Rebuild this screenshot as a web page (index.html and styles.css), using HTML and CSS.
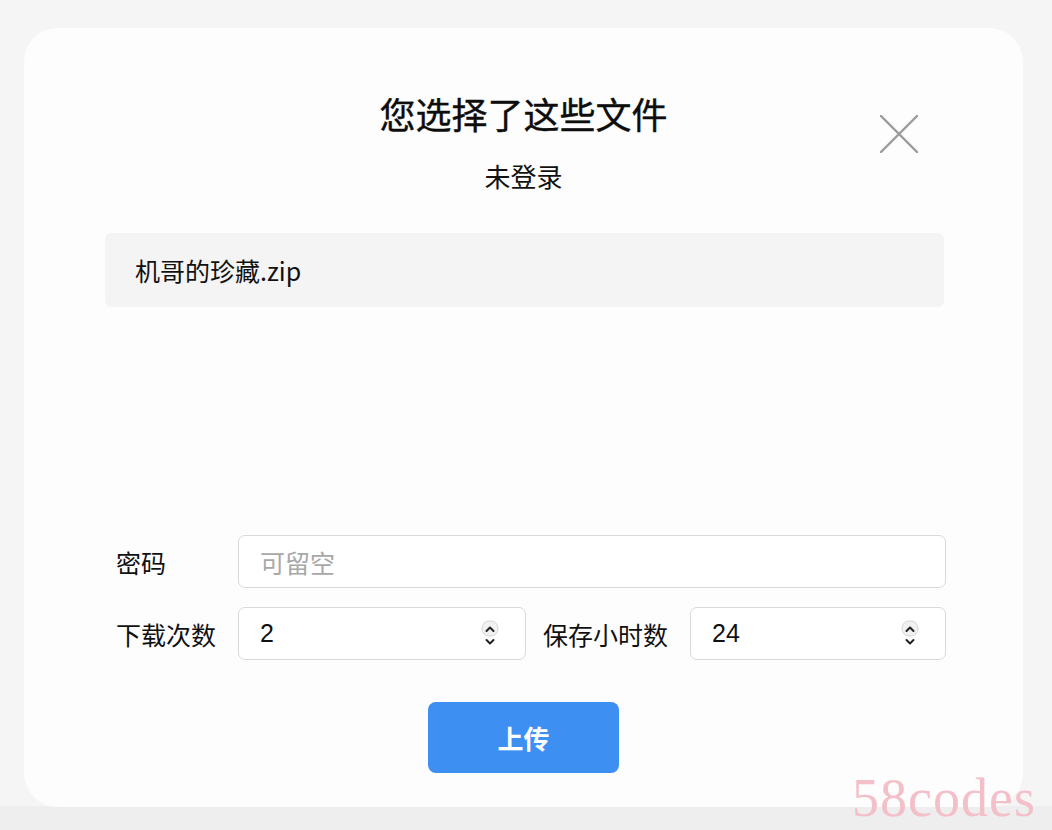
FILE: index.html
```html
<!DOCTYPE html>
<html lang="zh-CN">
<head>
<meta charset="utf-8">
<title>上传</title>
<link rel="stylesheet" href="styles.css">
</head>
<body>
<div class="page">
  <div class="card">
    <button class="close" aria-label="关闭">
      <svg width="38" height="38" viewBox="0 0 38 38"><path d="M1 1 L37 37 M37 1 L1 37" stroke="#9a9a9a" stroke-width="2.4" stroke-linecap="round" fill="none"/></svg>
    </button>
    <h1 class="title">您选择了这些文件</h1>
    <div class="subtitle">未登录</div>
    <div class="file-row">机哥的珍藏.zip</div>

    <div class="form">
      <div class="row">
        <label class="label">密码</label>
        <div class="field grow"><span class="placeholder">可留空</span></div>
      </div>
      <div class="row">
        <label class="label">下载次数</label>
        <div class="field count">
          <span class="value">2</span>
          <svg class="spin" width="18" height="30" viewBox="0 0 18 30"><rect x="1" y="1" width="16" height="15" rx="7" fill="#f1f1f1" stroke="#d6d6d6" stroke-width="1"/><path d="M5.5 11 L9 7.5 L12.5 11" stroke="#222" stroke-width="2" fill="none" stroke-linecap="round" stroke-linejoin="round"/><path d="M5.5 20 L9 23.5 L12.5 20" stroke="#222" stroke-width="2" fill="none" stroke-linecap="round" stroke-linejoin="round"/></svg>
        </div>
        <label class="label label2">保存小时数</label>
        <div class="field grow">
          <span class="value">24</span>
          <svg class="spin" width="18" height="30" viewBox="0 0 18 30"><rect x="1" y="1" width="16" height="15" rx="7" fill="#f1f1f1" stroke="#d6d6d6" stroke-width="1"/><path d="M5.5 11 L9 7.5 L12.5 11" stroke="#222" stroke-width="2" fill="none" stroke-linecap="round" stroke-linejoin="round"/><path d="M5.5 20 L9 23.5 L12.5 20" stroke="#222" stroke-width="2" fill="none" stroke-linecap="round" stroke-linejoin="round"/></svg>
        </div>
      </div>
    </div>
    <div class="actions">
      <button class="upload">上传</button>
    </div>
  </div>
  <div class="watermark">58codes</div>
</div>
</body>
</html>
```
FILE: styles.css
```css
html, body {
  margin: 0;
  padding: 0;
}
body {
  background: linear-gradient(#f5f5f5 0, #f5f5f5 806px, #eeeeee 806px);
  font-family: "Noto Sans CJK SC", "Noto Sans", sans-serif;
  color: #111;
  width: 1052px;
  height: 830px;
  overflow: hidden;
}
.page {
  position: relative;
  padding: 28px 29px 0 24px;
  height: 830px;
  box-sizing: border-box;
}
.card {
  position: relative;
  width: 999px;
  height: 779px;
  box-sizing: border-box;
  background: #fdfdfd;
  border-radius: 34px;
  padding: 64px 0 34px 0;
  display: flex;
  flex-direction: column;
}
.close {
  position: absolute;
  left: 856px;
  top: 87px;
  width: 38px;
  height: 38px;
  padding: 0;
  border: 0;
  background: none;
}
.close svg { display: block; }
.title {
  margin: 0;
  text-align: center;
  font-size: 36px;
  line-height: 42px;
  font-weight: 400;
  color: #0d0d0d;
  -webkit-text-stroke: 0.4px #0d0d0d;
}
.subtitle {
  margin-top: 27px;
  text-align: center;
  font-size: 26px;
  line-height: 30px;
  color: #111;
}
.file-row {
  margin: 42px 79px 0 81px;
  height: 74px;
  background: #f4f4f4;
  border-radius: 6px;
  padding-left: 30px;
  display: flex;
  align-items: center;
  font-size: 25px;
  color: #111;
}
.form {
  margin: auto 77px 0 92px;
  display: flex;
  flex-direction: column;
  gap: 19px;
}
.row {
  display: flex;
  align-items: center;
}
.label {
  width: 122px;
  flex: none;
  font-size: 25px;
  color: #111;
}
.label2 {
  width: 147px;
  margin-left: 17px;
}
.field {
  height: 53px;
  box-sizing: border-box;
  border: 1px solid #d9d9d9;
  border-radius: 7px;
  background: #fff;
  display: flex;
  align-items: center;
  padding: 0 26px 0 21px;
}
.grow { flex: 1; }
.count { width: 288px; flex: none; }
.placeholder {
  font-size: 25px;
  color: #a8a8a8;
}
.value {
  flex: 1;
  font-family: "Liberation Sans", Arial, sans-serif;
  font-size: 25px;
  color: #111;
}
.spin { display: block; margin-top: 2px; }
.actions {
  display: flex;
  justify-content: center;
  margin-top: 42px;
}
.upload {
  width: 191px;
  height: 71px;
  border: 0;
  border-radius: 8px;
  background: #3d8ff1;
  color: #fff;
  font-family: "Noto Sans CJK SC", sans-serif;
  font-size: 26px;
  font-weight: 700;
}
.watermark {
  position: absolute;
  left: 852px;
  top: 768px;
  font-family: "Liberation Serif", "Times New Roman", serif;
  font-size: 54px;
  line-height: 60px;
  color: #f3bfc8;
  letter-spacing: 1px;
}
```
